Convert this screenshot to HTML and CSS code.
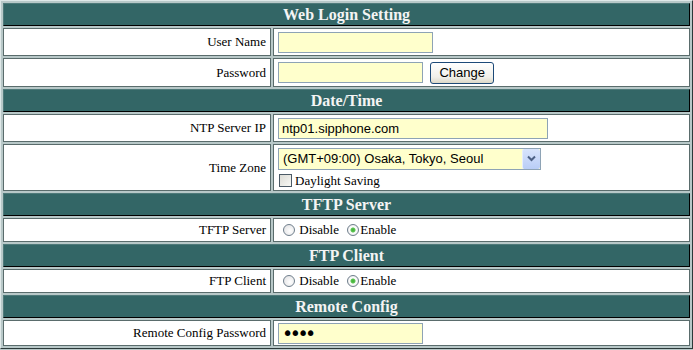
FILE: index.html
```html
<!DOCTYPE html>
<html lang="en">
<head>
    <meta charset="UTF-8">
    <title>System Setting</title>
    <link rel="stylesheet" href="styles.css">
</head>
<body>
    <!-- Settings table -->
    <table class="settings">
        <tr class="head"><td colspan="2">Web Login Setting</td></tr>
        <tr class="row">
            <td class="label">User Name</td>
            <td class="value"><input type="text" class="field w155"></td>
        </tr>
        <tr class="row row-pw">
            <td class="label">Password</td>
            <td class="value"><input type="password" class="field pass w145"> <button class="btn">Change</button></td>
        </tr>

        <tr class="head"><td colspan="2">Date/Time</td></tr>
        <tr class="row">
            <td class="label">NTP Server IP</td>
            <td class="value"><input type="text" class="field w270" value="ntp01.sipphone.com"></td>
        </tr>
        <tr class="row row-tz">
            <td class="label">Time Zone</td>
            <td class="value">
                <span class="select-wrap">
                    <select class="zone">
                        <option>(GMT+09:00) Osaka, Tokyo, Seoul</option>
                    </select>
                    <span class="arrow">
                        <svg width="9" height="7" viewBox="0 0 9 7"><path d="M1 1.5 L4.5 5 L8 1.5" fill="none" stroke="#4d6185" stroke-width="2"/></svg>
                    </span>
                </span>
                <div class="check-line"><input type="checkbox" class="box">Daylight Saving</div>
            </td>
        </tr>

        <tr class="head"><td colspan="2">TFTP Server</td></tr>
        <tr class="row row-radio">
            <td class="label">TFTP Server</td>
            <td class="value"><input type="radio" name="tftp" class="dot"> Disable <input type="radio" name="tftp" class="dot" checked>Enable</td>
        </tr>

        <tr class="head"><td colspan="2">FTP Client</td></tr>
        <tr class="row row-radio">
            <td class="label">FTP Client</td>
            <td class="value"><input type="radio" name="ftp" class="dot"> Disable <input type="radio" name="ftp" class="dot" checked>Enable</td>
        </tr>

        <tr class="head"><td colspan="2">Remote Config</td></tr>
        <tr class="row row-last">
            <td class="label">Remote Config Password</td>
            <td class="value"><input type="password" class="field pass w145" value="1234"></td>
        </tr>
    </table>
</body>
</html>
```

FILE: styles.css
```css
/* Page */
body {
    margin: 0;
    padding: 0;
    background: #b8c8c8;
    font-family: 'Liberation Serif', 'Times New Roman', serif;
    font-size: 13px;
    color: #000;
}

/* Table */
.settings {
    width: 693px;
    border-collapse: separate;
    border-spacing: 2px;
    background: #b8c8c8;
    border: 1px solid;
    border-color: #dfe8e8 #2c3a3a #2c3a3a #dfe8e8;
}

.settings td {
    padding: 0;
    border: 1px solid #5a6c6c;
}

/* Section titles */
.head td {
    height: 21px;
    background: #336666;
    color: #f4f4f4;
    font-weight: bold;
    font-size: 16px;
    line-height: 18px;
    text-align: center;
    border-color: #4f7a7a #000 #000 #4f7a7a;
}

/* Rows */
.row td {
    height: 26px;
    background: #fff;
}

.row-pw td {
    height: 27px;
}

.row-tz td {
    height: 45px;
}

.row-radio td {
    height: 22px;
}

.row-last td {
    height: 24px;
}

.label {
    width: 262px;
    text-align: right;
    padding-right: 4px !important;
}

.value {
    padding-left: 4px !important;
}

/* Inputs */
.field {
    box-sizing: border-box;
    height: 21px;
    margin: 0;
    padding: 1px 3px;
    background: #ffffcc;
    border: 1px solid #8ea3b5;
    font-family: 'Liberation Sans', Arial, sans-serif;
    font-size: 13px;
    vertical-align: middle;
}

.pass {
    font-family: 'DejaVu Sans', sans-serif;
    font-size: 19px;
    letter-spacing: -3.5px;
    padding: 0 3px;
}

.w155 { width: 155px; }
.w145 { width: 145px; }
.w270 { width: 270px; }

.btn {
    box-sizing: border-box;
    height: 22px;
    width: 64px;
    margin: 0 0 0 4px;
    padding: 0;
    border: 1px solid #1d4a78;
    border-radius: 3px;
    background: linear-gradient(#ffffff, #f1f0ea 70%, #dcd8c8);
    font-family: 'Liberation Sans', Arial, sans-serif;
    font-size: 13px;
    color: #000;
    vertical-align: middle;
}

/* Time zone select */
.select-wrap {
    position: relative;
    display: inline-block;
}

.zone {
    -webkit-appearance: none;
    appearance: none;
    box-sizing: border-box;
    width: 263px;
    height: 22px;
    margin: 0;
    padding: 0 0 0 4px;
    background: #ffffcc;
    border: 1px solid #8ea3b5;
    border-radius: 0;
    font-family: 'Liberation Sans', Arial, sans-serif;
    font-size: 13px;
    color: #000;
    display: block;
}

.arrow {
    position: absolute;
    right: 1px;
    top: 1px;
    width: 17px;
    height: 20px;
    background: linear-gradient(#d8e4fc, #b9cdf6);
    border-left: 1px solid #e6eefc;
    display: flex;
    align-items: center;
    justify-content: center;
    border-radius: 2px;
}

.check-line {
    margin-top: 3px;
    line-height: 15px;
}

/* Checkbox and radios */
.box {
    -webkit-appearance: none;
    appearance: none;
    width: 13px;
    height: 13px;
    margin: 0 3px 0 1px;
    border: 1px solid #4b5a66;
    background: linear-gradient(135deg, #dcdcd6, #f8f8f4);
    vertical-align: -2px;
}

.dot {
    -webkit-appearance: none;
    appearance: none;
    width: 12px;
    height: 12px;
    margin: 0 1px 0 5px;
    border: 1px solid #6f7e8c;
    border-radius: 50%;
    background: radial-gradient(circle at 60% 60%, #ffffff, #dedee0);
    vertical-align: -2px;
}

.dot:checked {
    background: radial-gradient(circle, #3fae35 0, #5cc352 2px, #ffffff 3px, #dedee0);
}
```
